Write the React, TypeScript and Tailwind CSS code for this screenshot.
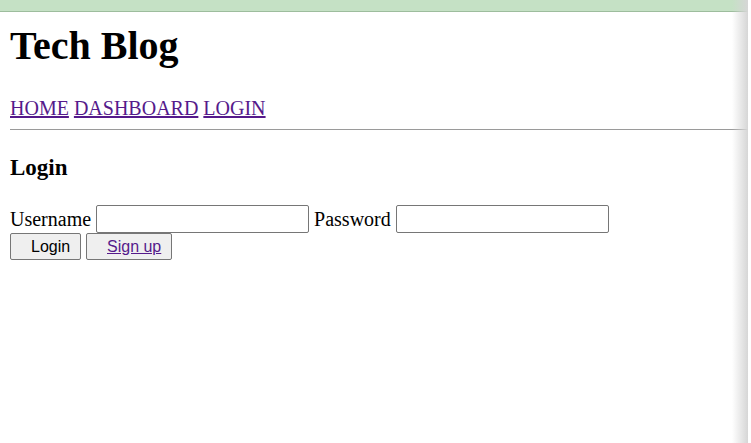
export default function App() {
  return (
    <div className="relative w-[748px] h-[443px] overflow-hidden bg-white font-['Liberation_Serif',serif] text-black">
      {/* top strip */}
      <div className="h-[12px] bg-[#c5e1c5] border-b border-[#9dbd9d]" />

      <header className="pl-[10px]">
        <h1 className="text-[40px] font-bold leading-[46px] mt-[11px]">Tech Blog</h1>
        <nav className="mt-[28px] text-[20px] leading-[23px] flex gap-[5px]">
          <a href="#" className="underline text-[#551a8b]">HOME</a>
          <a href="#" className="underline text-[#551a8b]">DASHBOARD</a>
          <a href="#" className="underline text-[#551a8b]">LOGIN</a>
        </nav>
      </header>

      <hr className="ml-[10px] mt-[9px] border-t border-[#9a9a9a]" />

      <main className="pl-[10px]">
        <h3 className="mt-[25px] text-[23px] font-bold leading-[26px]">Login</h3>
        <form className="mt-[24px]" onSubmit={(e) => e.preventDefault()}>
          <div className="flex items-center text-[20px] leading-[27px]">
            <label htmlFor="username">Username</label>
            <input
              id="username"
              type="text"
              className="ml-[5px] w-[213px] h-[28px] border border-[#767676] rounded-[2px] bg-white"
            />
            <label htmlFor="password" className="ml-[5px]">Password</label>
            <input
              id="password"
              type="password"
              className="ml-[5px] w-[213px] h-[28px] border border-[#767676] rounded-[2px] bg-white"
            />
          </div>
          <div className="flex gap-[5px] font-['Liberation_Sans',sans-serif] text-[16px] leading-[18px]">
            <button className="w-[71px] h-[27px] pl-[20px] pr-[6px] bg-[#efefef] border border-[#767676] rounded-[2px] text-left whitespace-nowrap">
              Login
            </button>
            <button className="w-[86px] h-[27px] pl-[20px] pr-[6px] bg-[#efefef] border border-[#767676] rounded-[2px] text-left whitespace-nowrap">
              <a href="#" className="underline text-[#551a8b]">Sign up</a>
            </button>
          </div>
        </form>
      </main>

      {/* right edge shade */}
      <div className="absolute top-0 right-0 h-full w-[16px] bg-gradient-to-r from-transparent to-[#d6d6d6] pointer-events-none" />
    </div>
  );
}
